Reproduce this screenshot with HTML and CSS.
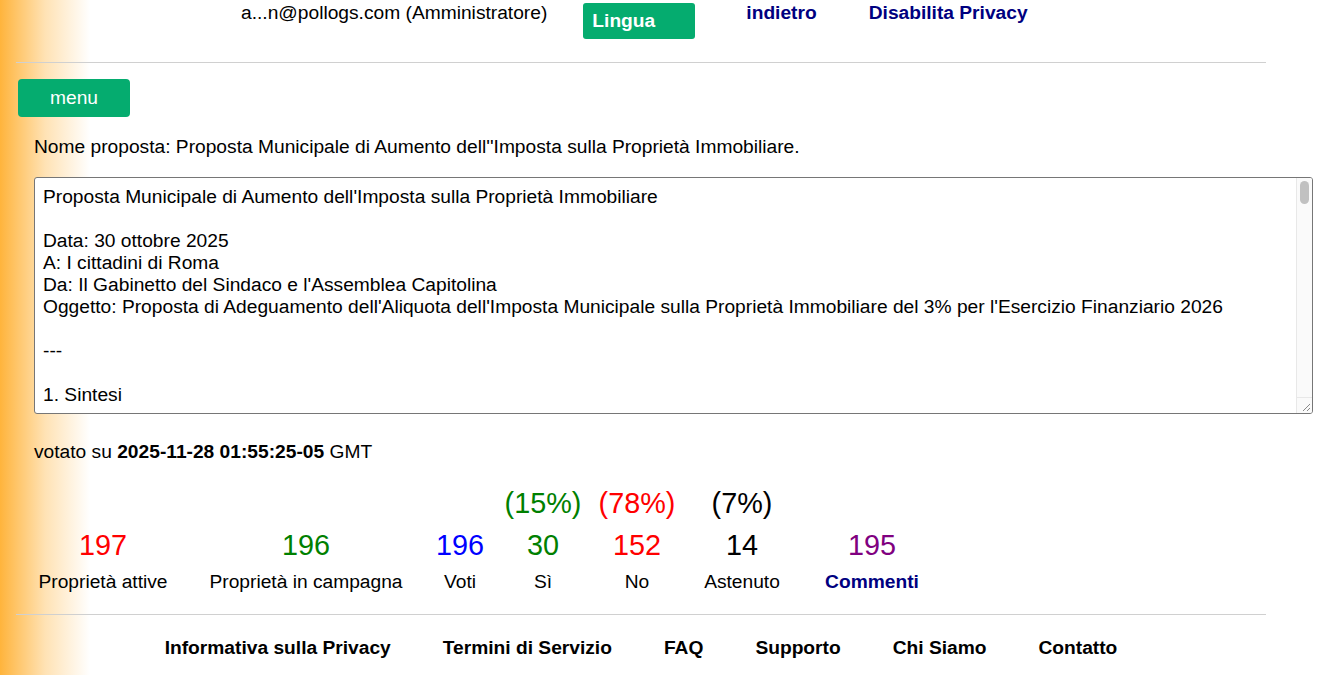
FILE: index.html
```html
<!DOCTYPE html>
<html lang="it">
<head>
<meta charset="utf-8">
<title>Proposta</title>
<link rel="stylesheet" href="styles.css">
</head>
<body>
<div class="page">
  <header class="topbar">
    <span class="user">a...n@pollogs.com (Amministratore)</span>
    <button class="btn btn-lang">Lingua</button>
    <a class="toplink link-back" href="#">indietro</a>
    <a class="toplink" href="#">Disabilita Privacy</a>
  </header>
  <div class="rule"></div>
  <button class="btn btn-menu">menu</button>
  <p class="name">Nome proposta: Proposta Municipale di Aumento dell''Imposta sulla Proprietà Immobiliare.</p>
  <div class="ta-wrap">
  <textarea class="body-text" readonly>Proposta Municipale di Aumento dell'Imposta sulla Proprietà Immobiliare

Data: 30 ottobre 2025
A: I cittadini di Roma
Da: Il Gabinetto del Sindaco e l'Assemblea Capitolina
Oggetto: Proposta di Adeguamento dell'Aliquota dell'Imposta Municipale sulla Proprietà Immobiliare del 3% per l'Esercizio Finanziario 2026

---

1. Sintesi

Il presente documento propone un adeguamento del 3% dell'aliquota dell'Imposta Municipale sulla Proprietà Immobiliare per l'Esercizio Finanziario 2026.

2. Motivazione

L'aumento è necessario per sostenere i servizi pubblici essenziali, la manutenzione delle infrastrutture e gli investimenti nella sicurezza urbana.

3. Impatto previsto

Si stima un incremento medio contenuto per nucleo familiare.

4. Conclusioni

La proposta sarà sottoposta al voto dei cittadini.

---

Fine del documento.</textarea>
    <div class="sb" aria-hidden="true">
      <div class="sb-track"><div class="sb-thumb"></div></div>
      <div class="sb-corner">
        <svg width="14" height="14" viewBox="0 0 14 14"><path d="M12 5 L5 12 M12 9 L9 12" stroke="#8a8a8a" stroke-width="1" fill="none"/></svg>
      </div>
    </div>
  </div>
  <p class="voted">votato su <b>2025-11-28 01:55:25-05</b> GMT</p>
  <div class="stats">
    <span class="pct"></span>
    <span class="pct"></span>
    <span class="pct"></span>
    <span class="pct green">(15%)</span>
    <span class="pct red">(78%)</span>
    <span class="pct black">(7%)</span>
    <span class="pct"></span>

    <span class="num red">197</span>
    <span class="num green">196</span>
    <span class="num blue">196</span>
    <span class="num green">30</span>
    <span class="num red">152</span>
    <span class="num black">14</span>
    <span class="num purple">195</span>

    <span class="lbl">Proprietà attive</span>
    <span class="lbl">Proprietà in campagna</span>
    <span class="lbl">Voti</span>
    <span class="lbl">Sì</span>
    <span class="lbl">No</span>
    <span class="lbl">Astenuto</span>
    <a class="lbl lbl-link" href="#">Commenti</a>
  </div>
  <div class="rule rule-bottom"></div>
  <footer class="footer">
    <a href="#">Informativa sulla Privacy</a>
    <a href="#">Termini di Servizio</a>
    <a href="#">FAQ</a>
    <a href="#">Supporto</a>
    <a href="#">Chi Siamo</a>
    <a href="#">Contatto</a>
  </footer>
</div>
</body>
</html>
```
FILE: styles.css
```css
html, body {
  margin: 0;
  padding: 0;
}
body {
  background: linear-gradient(to right, #ffb43c 0, #ffe2b4 45px, #ffffff 90px) no-repeat;
  background-color: #fff;
  min-height: 675px;
  font-family: "Liberation Sans", Arial, sans-serif;
  font-size: 19.2px;
  line-height: 22px;
  color: #000;
}
.page {
  display: flex;
  flex-direction: column;
  align-items: flex-start;
}
.topbar {
  display: flex;
  align-items: flex-start;
  height: 62px;
  padding-left: 241px;
  box-sizing: border-box;
}
.user {
  margin-top: 2px;
}
.btn {
  font-family: "Liberation Sans", Arial, sans-serif;
  background: #05ac6f;
  color: #fff;
  border: none;
  border-radius: 3px;
  cursor: pointer;
  padding: 0;
}
.btn-lang {
  margin: 3px 0 0 36px;
  width: 112px;
  height: 36px;
  font-size: 19.2px;
  font-weight: bold;
  text-align: left;
  padding-left: 9px;
}
.toplink {
  margin: 2px 0 0 52px;
  color: #000080;
  font-weight: bold;
  text-decoration: none;
}
.link-back {
  margin-left: 51px;
}
.rule {
  align-self: stretch;
  margin: 0 58px 0 16px;
  border-top: 1px solid #d0d0d0;
}
.btn-menu {
  margin: 16px 0 0 18px;
  width: 112px;
  height: 38px;
  font-size: 19.2px;
  border-radius: 4px;
}
.name {
  margin: 19px 0 0 34px;
}
.ta-wrap {
  position: relative;
  margin: 19px 0 0 34px;
  width: 1279px;
  height: 237px;
}
.body-text {
  display: block;
  width: 1279px;
  height: 237px;
  box-sizing: border-box;
  padding: 8px 24px 7px 8px;
  border: 1px solid #767676;
  border-radius: 3px;
  font-family: "Liberation Sans", Arial, sans-serif;
  font-size: 19.2px;
  line-height: 22px;
  color: #000;
  resize: none;
  overflow: hidden;
  white-space: pre-wrap;
}
.sb {
  position: absolute;
  top: 1px;
  right: 1px;
  bottom: 1px;
  width: 15px;
  display: flex;
  flex-direction: column;
  background: #fafafa;
  border-left: 1px solid #e8e8e8;
  border-radius: 0 2px 2px 0;
}
.sb-track {
  flex: 1;
  padding: 3px 3px 0 3px;
}
.sb-thumb {
  height: 23px;
  border-radius: 5px;
  background: #c1c1c1;
}
.sb-corner {
  height: 15px;
  border-top: 1px solid #e8e8e8;
  display: flex;
  align-items: flex-end;
  justify-content: flex-end;
}
.sb-corner svg {
  display: block;
}
.voted {
  margin: 27px 0 0 34px;
}
.stats {
  margin: 24px 0 0 18px;
  display: grid;
  grid-template-columns: 170px 236px 72px 94px 94px 116px 144px;
  justify-items: center;
}
.pct, .num {
  font-size: 28.8px;
  line-height: 33px;
}
.num {
  margin-top: 9px;
}
.lbl {
  margin-top: 9px;
}
.lbl-link {
  color: #000080;
  font-weight: bold;
  text-decoration: none;
}
.red { color: #ff0000; }
.green { color: #008000; }
.blue { color: #0000ff; }
.black { color: #000; }
.purple { color: #800080; }
.rule-bottom {
  margin-top: 21px;
}
.footer {
  align-self: stretch;
  margin: 22px 58px 0 16px;
  display: flex;
  justify-content: center;
  gap: 52px;
}
.footer a {
  color: #000;
  font-weight: bold;
  text-decoration: none;
}
```
